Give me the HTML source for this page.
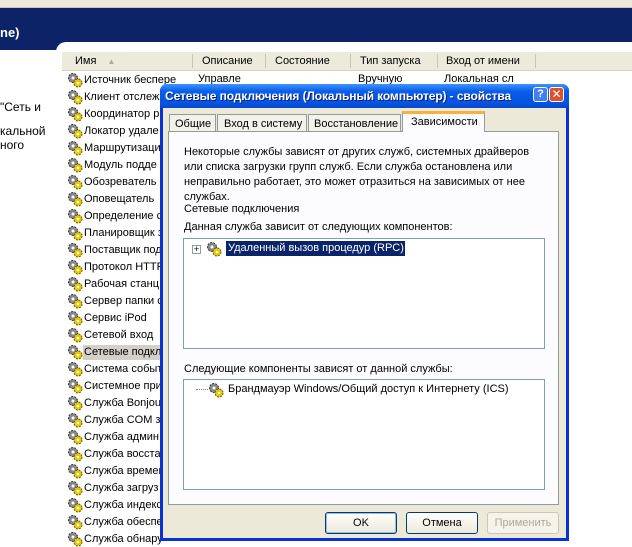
<!DOCTYPE html>
<html><head><meta charset="utf-8"><style>
*{margin:0;padding:0;box-sizing:border-box}
body{width:632px;height:547px;overflow:hidden;background:#fff;font-family:"Liberation Sans","DejaVu Sans",sans-serif;font-size:11px;color:#000;position:relative}
.a{position:absolute;white-space:nowrap}
.g{position:absolute;width:16px;height:16px}
</style></head><body>
<div class="a" style="left:0;top:0;width:632px;height:8px;background:#ece9d8;border-bottom:1px solid #c8c4b4"></div>
<div class="a" style="left:0;top:8px;width:632px;height:42px;background:#0c2467"></div>
<div class="a" style="left:56px;top:42px;width:576px;height:20px;background:#fff;border-top-left-radius:10px"></div>
<div class="a" style="left:0;top:25px;color:#fff;font-weight:bold;font-size:13px">ne)</div>
<div class="a" style="left:0;top:100px;font-size:12px">"Сеть и</div>
<div class="a" style="left:0;top:124px;font-size:12px">кальной</div>
<div class="a" style="left:0;top:138px;font-size:12px">ного</div>
<!-- header -->
<div class="a" style="left:62px;top:52px;width:570px;height:19px;background:#ebeadb;border-bottom:1px solid #d6d2c2"></div>
<div class="a" style="left:75px;top:55px">Имя <span style="color:#aaa;font-size:8px;margin-left:8px">▲</span></div>
<div class="a" style="left:192px;top:54px;width:1px;height:14px;background:#c7c5b2"></div>
<div class="a" style="left:202px;top:55px">Описание</div>
<div class="a" style="left:265px;top:54px;width:1px;height:14px;background:#c7c5b2"></div>
<div class="a" style="left:275px;top:55px">Состояние</div>
<div class="a" style="left:350px;top:54px;width:1px;height:14px;background:#c7c5b2"></div>
<div class="a" style="left:360px;top:55px">Тип запуска</div>
<div class="a" style="left:437px;top:54px;width:1px;height:14px;background:#c7c5b2"></div>
<div class="a" style="left:446px;top:55px">Вход от имени</div>
<div class="a" style="left:535px;top:54px;width:1px;height:14px;background:#c7c5b2"></div>
<div class="a" style="left:198px;top:73px">Управле</div>
<div class="a" style="left:358px;top:73px">Вручную</div>
<div class="a" style="left:444px;top:73px">Локальная сл</div>
<div id="rows"></div>
<script>
var n=["Источник беспере","Клиент отслеж","Координатор р","Локатор удале","Маршрутизаци","Модуль подде","Обозреватель","Оповещатель","Определение с","Планировщик з","Поставщик под","Протокол HTTP","Рабочая станц","Сервер папки с","Сервис iPod","Сетевой вход","Сетевые подкл","Система событ","Системное при","Служба Bonjou","Служба COM з","Служба админ","Служба восста","Служба времен","Служба загруз","Служба индекс","Служба обеспе","Служба обнару"];
var h="";
for(var i=0;i<n.length;i++){var y=72+i*17;
if(i==16)h+='<div class="a" style="left:83px;top:'+(y+1)+'px;width:80px;height:15px;background:#d4d0c8"></div>';
h+='<svg class="g" style="left:67px;top:'+y+'px" viewBox="0 0 16 16"><circle cx="6" cy="6" r="4.5" fill="#888" stroke="#333" stroke-dasharray="2 1.2"/><circle cx="6" cy="6" r="1.5" fill="#fff"/><circle cx="11" cy="11" r="4" fill="#e8c800" stroke="#6a5a00" stroke-dasharray="2 1.2"/><circle cx="11" cy="11" r="1.3" fill="#fff"/></svg>';
h+='<div class="a" style="left:84px;top:'+(y+2)+'px">'+n[i]+'</div>';}
document.getElementById("rows").innerHTML=h;
</script>
<!-- dialog -->
<div class="a" style="left:160px;top:84px;width:409px;height:457px;background:#0831d9;border-radius:7px 7px 0 0"></div>
<div class="a" style="left:160px;top:84px;width:409px;height:24px;background:linear-gradient(#3d95ff,#0a5ee8 30%,#0554e3 80%,#0848c8);border-radius:7px 7px 0 0"></div>
<div class="a" style="left:165px;top:89px;color:#fff;font-weight:bold;font-size:12px;letter-spacing:-0.1px;text-shadow:1px 1px #0a1e6e">Сетевые подключения (Локальный компьютер) - свойства</div>
<div class="a" style="left:533px;top:87px;width:15px;height:15px;background:#3f7ef5;border:1px solid #fff;border-radius:3px;color:#fff;font-weight:bold;font-size:11px;text-align:center;line-height:13px">?</div>
<div class="a" style="left:549px;top:87px;width:15px;height:15px;background:#e0512a;border:1px solid #fff;border-radius:3px;color:#fff;font-weight:bold;font-size:12px;text-align:center;line-height:13px">✕</div>
<div class="a" style="left:163px;top:108px;width:403px;height:430px;background:#ece9d8"></div>
<!-- tabs -->
<div class="a" style="left:169px;top:114px;width:47px;height:18px;background:#f2f1ea;border:1px solid #919b9c;border-bottom:none;padding:3px 0 0 5px">Общие</div>
<div class="a" style="left:217px;top:114px;width:90px;height:18px;background:#f2f1ea;border:1px solid #919b9c;border-bottom:none;padding:3px 0 0 6px">Вход в систему</div>
<div class="a" style="left:308px;top:114px;width:93px;height:18px;background:#f2f1ea;border:1px solid #919b9c;border-bottom:none;padding:3px 0 0 5px">Восстановление</div>
<div class="a" style="left:168px;top:131px;width:391px;height:374px;background:#fcfcfe;border:1px solid #919b9c"></div>
<div class="a" style="left:402px;top:111px;width:83px;height:21px;background:#fcfcfe;border:1px solid #919b9c;border-top:3px solid #f7b140;border-bottom:none;padding:2px 0 0 8px">Зависимости</div>
<div class="a" style="left:184px;top:145px;line-height:15px">Некоторые службы зависят от других служб, системных драйверов<br>или списка загрузки групп служб. Если служба остановлена или<br>неправильно работает, это может отразиться на зависимых от нее<br>службах.</div>
<div class="a" style="left:184px;top:203px">Сетевые подключения</div>
<div class="a" style="left:184px;top:221px">Данная служба зависит от следующих компонентов:</div>
<div class="a" style="left:183px;top:238px;width:362px;height:111px;background:#fff;border:1px solid #7f9db9"></div>
<div class="a" style="left:192px;top:245px;width:9px;height:9px;border:1px solid #919b9c;background:#fff;font-size:9px;line-height:7px;text-align:center;color:#000">+</div>
<svg class="g" style="left:206px;top:241px" viewBox="0 0 16 16"><circle cx="6" cy="6" r="4.5" fill="#888" stroke="#333" stroke-dasharray="2 1.2"/><circle cx="6" cy="6" r="1.5" fill="#fff"/><circle cx="11" cy="11" r="4" fill="#e8c800" stroke="#6a5a00" stroke-dasharray="2 1.2"/><circle cx="11" cy="11" r="1.3" fill="#fff"/></svg>
<div class="a" style="left:226px;top:241px;width:179px;height:15px;background:#0a246a;color:#fff;padding:1px 0 0 2px">Удаленный вызов процедур (RPC)</div>
<div class="a" style="left:184px;top:363px">Следующие компоненты зависят от данной службы:</div>
<div class="a" style="left:183px;top:379px;width:362px;height:111px;background:#fff;border:1px solid #7f9db9"></div>
<div class="a" style="left:196px;top:389px;width:12px;border-top:1px dotted #888"></div>
<svg class="g" style="left:208px;top:382px" viewBox="0 0 16 16"><circle cx="6" cy="6" r="4.5" fill="#888" stroke="#333" stroke-dasharray="2 1.2"/><circle cx="6" cy="6" r="1.5" fill="#fff"/><circle cx="11" cy="11" r="4" fill="#e8c800" stroke="#6a5a00" stroke-dasharray="2 1.2"/><circle cx="11" cy="11" r="1.3" fill="#fff"/></svg>
<div class="a" style="left:228px;top:383px">Брандмауэр Windows/Общий доступ к Интернету (ICS)</div>
<div class="a" style="left:325px;top:512px;width:72px;height:22px;border:1px solid #003c74;border-radius:3px;background:linear-gradient(#fff,#ece9d8);box-shadow:inset 0 0 0 1px #9cb9ea;text-align:center;line-height:20px">OK</div>
<div class="a" style="left:406px;top:512px;width:72px;height:22px;border:1px solid #003c74;border-radius:3px;background:linear-gradient(#fff,#ece9d8);text-align:center;line-height:20px">Отмена</div>
<div class="a" style="left:487px;top:512px;width:72px;height:22px;border:1px solid #c9c7ba;border-radius:3px;background:#f5f4ea;color:#aca899;text-align:center;line-height:20px">Применить</div>
</body></html>
